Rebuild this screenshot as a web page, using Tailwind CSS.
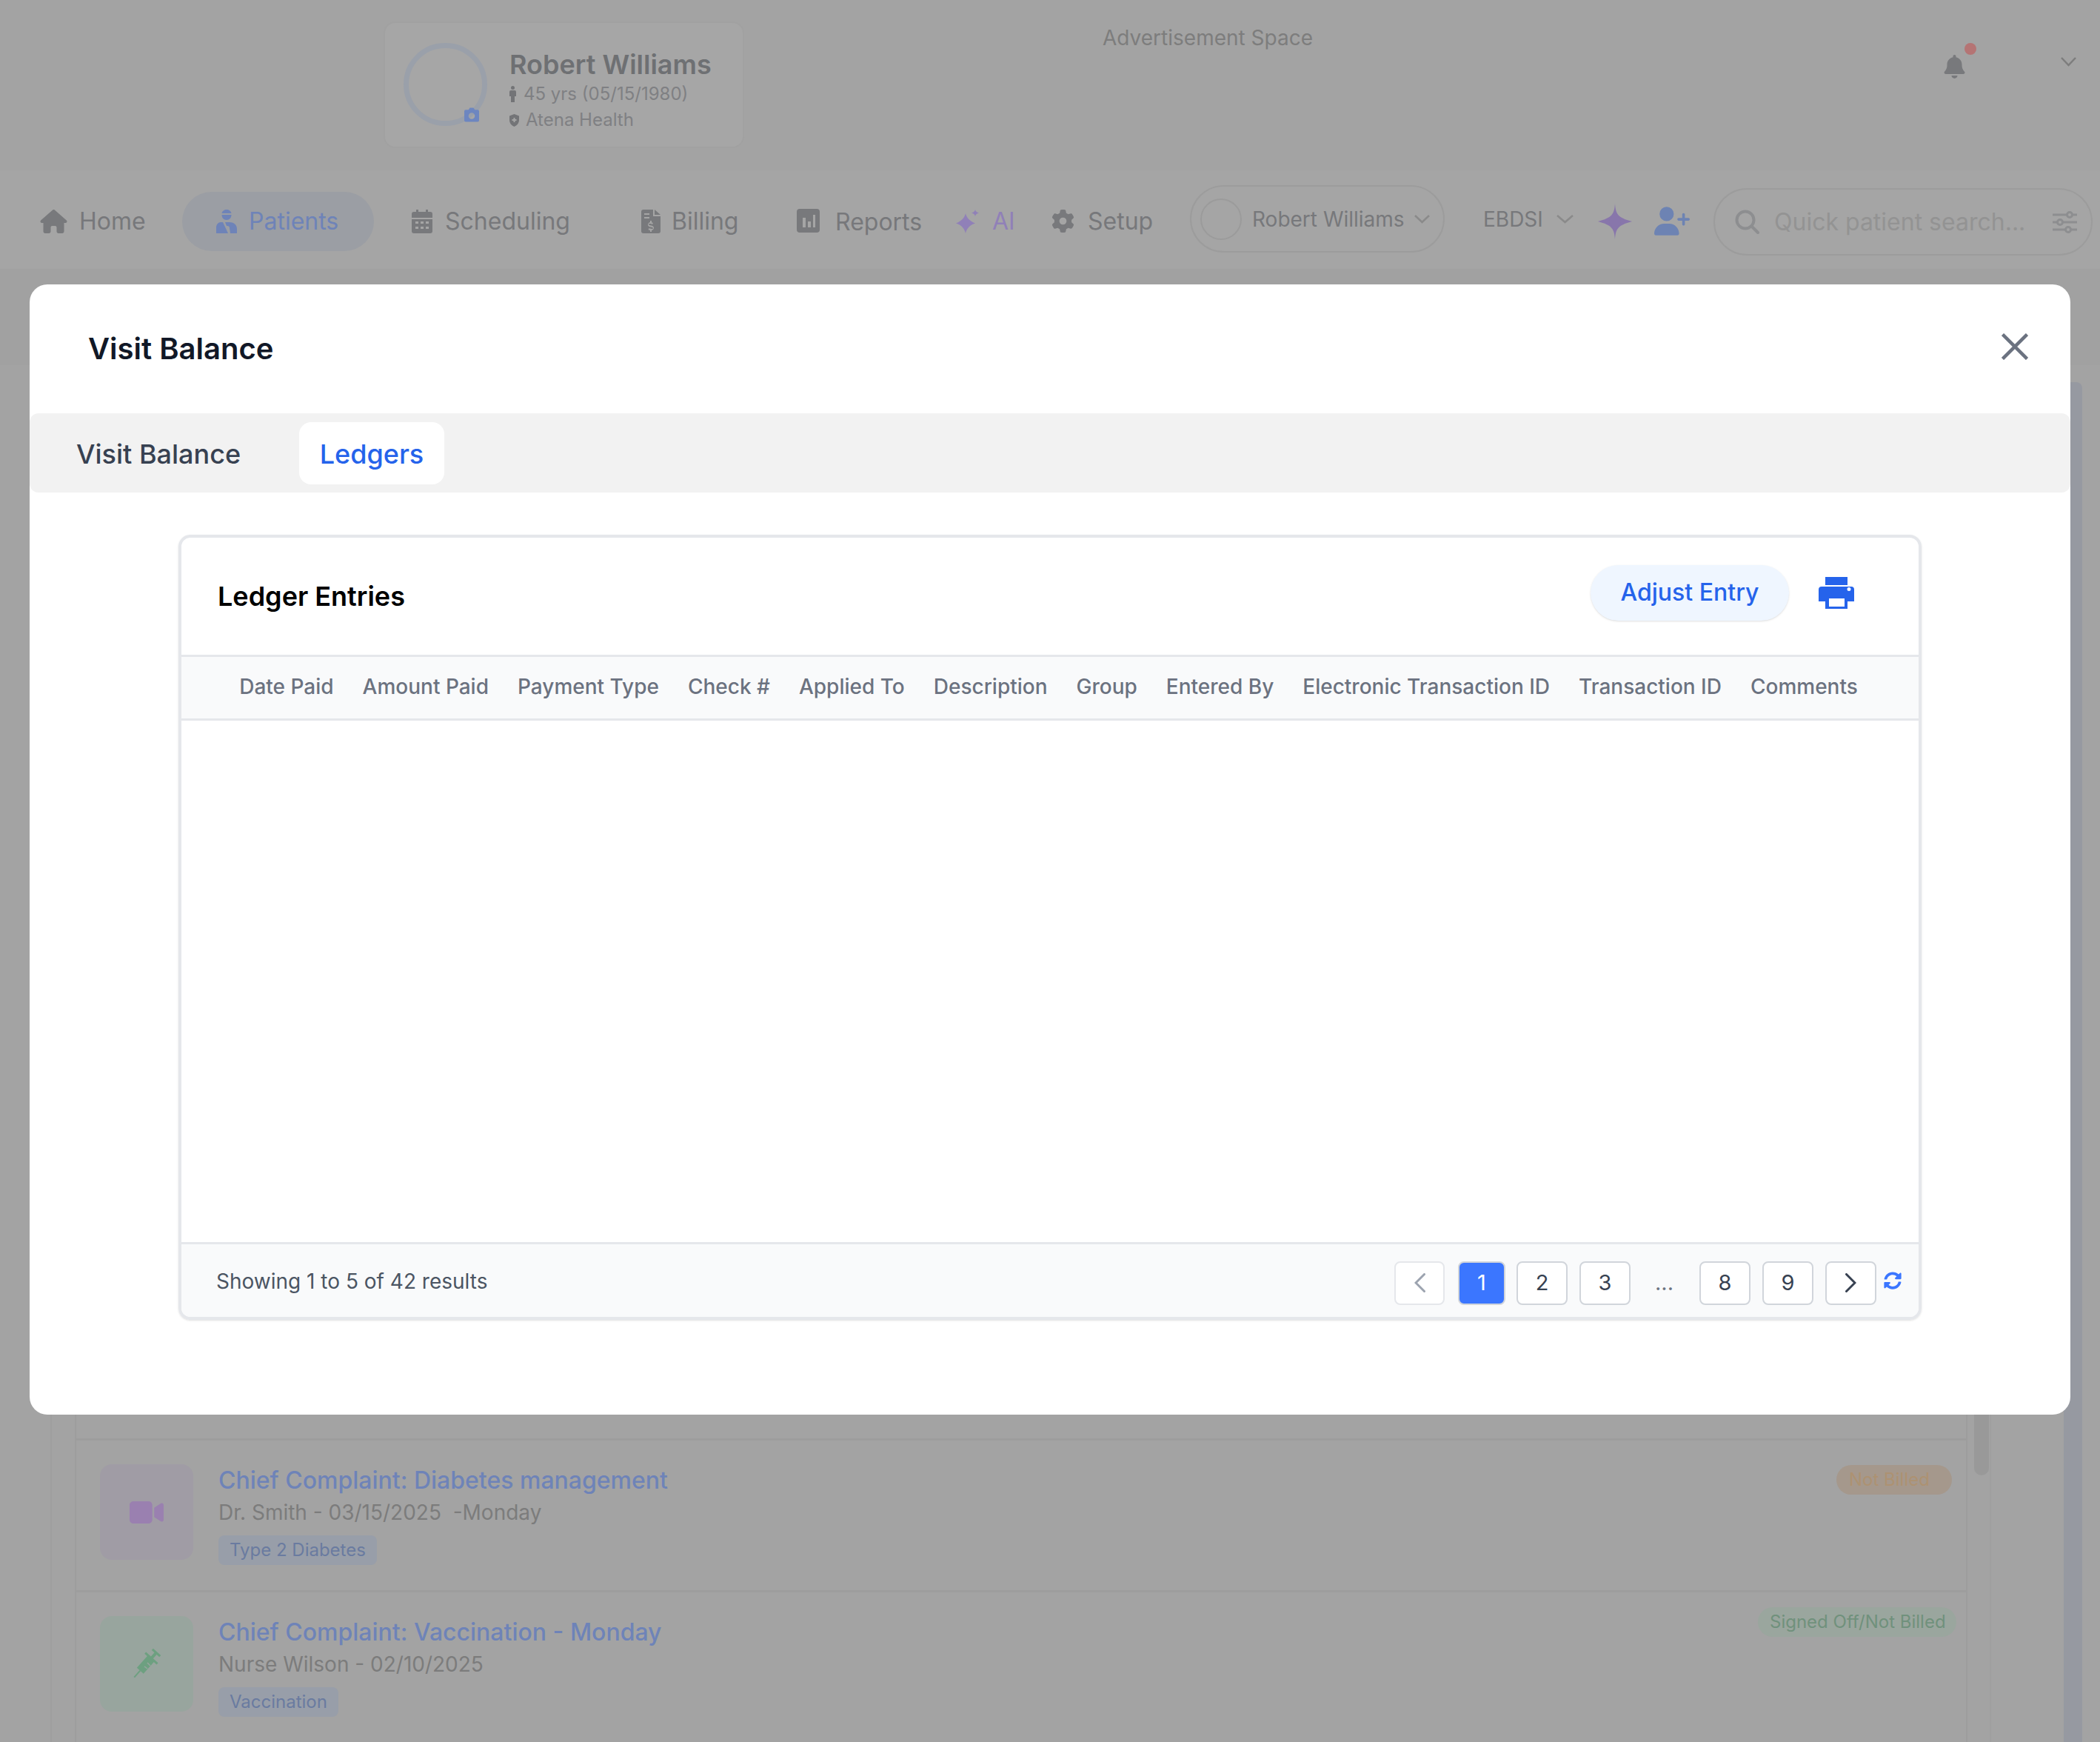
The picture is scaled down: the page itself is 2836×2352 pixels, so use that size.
<!DOCTYPE html>
<html lang="en">
<head>
  <meta charset="UTF-8" />
  <title>Visit Balance</title>
  <script src="https://cdn.jsdelivr.net/npm/@tailwindcss/browser@4"></script>
</head>
<body class="font-[Inter,sans-serif]">
  <div class="relative h-[2352px] w-[2836px] overflow-hidden bg-[#a3a3a3]">

    <!-- top header (dimmed behind the modal) -->
    <header class="flex h-[230px]">
      <div class="ml-[518px] mt-[29px] flex h-[171px] w-[487px] rounded-2xl border-2 border-[#a1a1a1] bg-[#a6a6a6] pl-[25px]">
        <div class="relative mt-[27px] h-[112px] w-[113px] rounded-full border-[7px] border-[#9aa0aa]">
          <svg class="absolute left-[75px] top-[80px] h-[20px] w-[20px]" viewBox="0 0 21 20"><path fill="#6d86c0" fill-rule="evenodd" d="M2 3h4l2-3h5l2 3h4a2 2 0 0 1 2 2v13a2 2 0 0 1-2 2H2a2 2 0 0 1-2-2V5a2 2 0 0 1 2-2zm8.500 4a4.500 4.500 0 1 0 0 9 4.500 4.500 0 0 0 0-9z"/></svg>
        </div>
        <div class="ml-[30px] mt-[33px]">
          <p class="text-[36px] font-semibold leading-[46px] text-[#6e7073]">Robert Williams</p>
          <p class="mt-[1px] flex items-center gap-[10px] text-[24px] leading-[32px] text-[#7f8083]">
            <svg class="h-[22px] w-[9px]" viewBox="0 0 9 22"><circle cx="4.500" cy="2.500" r="2.500" fill="#737477"/><path fill="#737477" d="M0 8a2 2 0 0 1 2-2h5a2 2 0 0 1 2 2v6H7v8H2v-8H0z"/></svg>45 yrs (05/15/1980)</p>
          <p class="mt-[3px] flex items-center gap-[9px] text-[24px] leading-[32px] text-[#7f8083]">
            <svg class="h-[17px] w-[13px]" viewBox="0 0 13 17"><path fill="#737477" fill-rule="evenodd" d="M6.500 0 13 2.500V8c0 4-2.700 7.400-6.500 9C2.700 15.400 0 12 0 8V2.500zM5.500 5v2h-2v2h2v2h2V9h2V7h-2V5z"/></svg>Atena Health</p>
        </div>
      </div>
      <p class="ml-[484px] mt-[33px] h-fit text-[28px] leading-[36px] text-[#7d7d7d]">Advertisement Space</p>
      <div class="relative ml-[852px] mt-[74px] h-[32px] w-[29px]">
        <svg class="h-[32px] w-[29px]" viewBox="0 0 448 512"><path fill="#78797c" d="M224 0c-17.700 0-32 14.300-32 32V51.200C119 66 64 130.600 64 208v18.800c0 47-17.300 92.400-48.500 127.600l-7.400 8.300c-8.400 9.400-10.400 22.900-5.300 34.400S19.400 416 32 416H416c12.600 0 24-7.400 29.200-18.900s3.100-25-5.300-34.400l-7.400-8.300C401.300 319.200 384 273.900 384 226.800V208c0-77.400-55-142-128-156.800V32c0-17.700-14.300-32-32-32zm45.300 493.300c12-12 18.700-28.300 18.700-45.300H224 160c0 17 6.700 33.300 18.700 45.300s28.300 18.700 45.300 18.700s33.300-6.700 45.300-18.700z"/></svg>
        <span class="absolute left-[28px] top-[-16px] h-[16px] w-[16px] rounded-full bg-[#b57474]"></span>
      </div>
      <svg class="ml-[129px] mt-[77px] h-[13px] w-[21px]" viewBox="0 0 21 13" fill="none"><path stroke="#7d7d7d" stroke-width="2.500" d="m1 1 9.500 10L20 1"/></svg>
    </header>

    <!-- nav bar -->
    <nav class="flex h-[133px] items-center bg-[#a5a5a5] pl-[54px] pt-[4px] text-[32px] leading-[44px] text-[#77787b]">
      <div class="flex w-[192px] items-center gap-[16px]">
        <svg class="h-[32px] w-[37px]" viewBox="0 0 576 512"><path fill="#78797c" d="M575.800 255.500c0 18-15 32.100-32 32.100h-32l.7 160.200c0 2.700-.2 5.400-.5 8.100V472c0 22.100-17.900 40-40 40H456c-1.100 0-2.200 0-3.300-.1c-1.400 .1-2.800 .1-4.200 .1H416 392c-22.100 0-40-17.900-40-40V448 384c0-17.700-14.300-32-32-32H256c-17.700 0-32 14.300-32 32v64 24c0 22.100-17.900 40-40 40H160 128.100c-1.500 0-3-.1-4.500-.2c-1.200 .1-2.400 .2-3.600 .2H104c-22.100 0-40-17.900-40-40V360c0-.9 0-1.900 .1-2.800V287.600H32c-18 0-32-14-32-32.100c0-9 3-17 10-24L266.400 8c7-7 15-8 22-8s15 2 21 7L564.800 231.500c8 7 12 15 11 24z"/></svg>
        <span>Home</span>
      </div>
      <div class="flex h-[80px] w-[259px] items-center gap-[16px] rounded-[40px] bg-[#9b9ea4] pl-[46px] text-[#6e83b8]">
        <svg class="h-[32px] w-[28px]" viewBox="0 0 28 32"><path fill="#6e83b8" fill-rule="evenodd" d="M14 0c3 0 6 2 6.500 5h-13C8 2 11 0 14 0zM7.500 7h13c0 4-2.500 7-6.500 7s-6.500-3-6.500-7zM6 17h3l7 15H0v-8c0-3 2-7 6-7zm6 0h6c5 0 10 3 10 9v6h-9l-1-7a3 3 0 0 0-3-3h-1z"/></svg>
        <span>Patients</span>
      </div>
      <div class="flex w-[361px] items-center gap-[17px] pl-[51px]">
        <svg class="h-[32px] w-[28px]" viewBox="0 0 28 32"><path fill="#78797c" fill-rule="evenodd" d="M6 0h3v3h10V0h3v3h3a3 3 0 0 1 3 3v5H0V6a3 3 0 0 1 3-3h3zM0 13h28v16a3 3 0 0 1-3 3H3a3 3 0 0 1-3-3zm5 3v3h4v-3zm7 0v3h4v-3zm7 0v3h4v-3zM5 23v3h4v-3zm7 0v3h4v-3zm7 0v3h4v-3z"/></svg>
        <span>Scheduling</span>
      </div>
      <div class="flex w-[210px] items-center gap-[15px]">
        <svg class="h-[32px] w-[26px]" viewBox="0 0 26 32"><path fill="#78797c" fill-rule="evenodd" d="M3 0h13v9h10v20a3 3 0 0 1-3 3H3a3 3 0 0 1-3-3V3a3 3 0 0 1 3-3zm15 0 8 7h-8zM4 5v2h7V5zm0 5v2h7v-2zm10 5h-2v2c-2 .5-3 2-3 3.500 0 4 7 2.500 7 4.500 0 1.500-4 1-5.500 0l-1 2c1 .8 2.500 1 2.500 1v2h2v-2c2-.5 3-2 3-3.500 0-4-7-2.500-7-4.500 0-1.500 3.500-1 5 0l1-2c-.8-.5-2-.8-2-.8z"/></svg>
        <span>Billing</span>
      </div>
      <div class="flex w-[215px] items-center gap-[21px] pt-[3px]">
        <svg class="-mt-[4px] h-[32px] w-[31px]" viewBox="0 0 31 32"><path fill="#78797c" fill-rule="evenodd" d="M4 0h23a4 4 0 0 1 4 4v24a4 4 0 0 1-4 4H4a4 4 0 0 1-4-4V4a4 4 0 0 1 4-4zm4 12v13h4V12zm7 5v8h4v-8zm7-9v17h3V8z"/></svg>
        <span>Reports</span>
      </div>
      <div class="flex w-[129px] items-center gap-[18px] text-[#9080b8]">
        <svg class="h-[32px] w-[31px]" viewBox="0 0 31 32"><path fill="#9080b8" d="M13 5c1.500 6 5 10 13 13.500C18 21 14.500 26 13 32 11.500 26 8 21 0 18.500 8 15 11.500 11 13 5zM26 0c.6 2.500 1.700 3.500 5 4.500-3.300 1-4.400 2-5 4.500-.6-2.500-1.700-3.500-5-4.500 3.300-1 4.400-2 5-4.500z"/></svg>
        <span>AI</span>
      </div>
      <div class="flex w-[187px] items-center gap-[18px]">
        <svg class="h-[31px] w-[31px]" viewBox="0 0 512 512"><path fill="#78797c" d="M495.900 166.600c3.200 8.700 .5 18.400-6.400 24.600l-43.300 39.400c1.100 8.300 1.700 16.800 1.700 25.400s-.6 17.100-1.700 25.400l43.300 39.400c6.900 6.200 9.600 15.900 6.400 24.600c-4.400 11.900-9.700 23.300-15.800 34.300l-4.700 8.100c-6.600 11-14 21.400-22.100 31.200c-5.900 7.200-15.700 9.600-24.500 6.800l-55.700-17.700c-13.400 10.300-28.200 18.900-44 25.400l-12.500 57.100c-2 9.100-9 16.300-18.200 17.800c-13.800 2.300-28 3.500-42.500 3.500s-28.700-1.200-42.500-3.500c-9.200-1.500-16.200-8.700-18.200-17.800l-12.500-57.100c-15.800-6.500-30.600-15.100-44-25.400L83.100 425.900c-8.800 2.800-18.600 .3-24.500-6.800c-8.100-9.800-15.500-20.200-22.100-31.200l-4.700-8.100c-6.100-11-11.400-22.400-15.800-34.300c-3.200-8.700-.5-18.400 6.400-24.600l43.300-39.400C64.600 273.100 64 264.600 64 256s.6-17.100 1.700-25.400L22.400 191.200c-6.900-6.200-9.600-15.900-6.400-24.600c4.400-11.900 9.700-23.300 15.800-34.300l4.700-8.100c6.600-11 14-21.400 22.100-31.200c5.900-7.200 15.700-9.600 24.500-6.800l55.700 17.700c13.400-10.300 28.200-18.900 44-25.400l12.500-57.100c2-9.100 9-16.300 18.200-17.800C227.300 1.200 241.500 0 256 0s28.700 1.200 42.500 3.500c9.200 1.500 16.200 8.700 18.200 17.800l12.500 57.100c15.800 6.500 30.600 15.100 44 25.400l55.700-17.700c8.800-2.800 18.600-.3 24.500 6.800c8.100 9.800 15.500 20.200 22.100 31.200l4.700 8.100c6.100 11 11.400 22.400 15.800 34.300zM256 336a80 80 0 1 0 0-160 80 80 0 1 0 0 160z"/></svg>
        <span>Setup</span>
      </div>
      <div class="flex h-[91px] w-[344px] -translate-y-[3px] items-center rounded-[46px] border-2 border-[#9c9c9c] pl-[12px] text-[28px]">
        <span class="h-[56px] w-[56px] shrink-0 rounded-full border-2 border-[#9b9b9b]"></span>
        <span class="ml-[14px] whitespace-nowrap">Robert Williams</span>
        <svg class="ml-[13px] h-[12px] w-[21px]" viewBox="0 0 21 12" fill="none"><path stroke="#8a8a8a" stroke-width="2.500" d="m1 1 9.500 9L20 1"/></svg>
      </div>
      <div class="ml-[52px] flex w-[155px] -translate-y-[3px] items-center gap-[18px] text-[28px]">
        <span>EBDSI</span>
        <svg class="h-[12px] w-[23px]" viewBox="0 0 23 12" fill="none"><path stroke="#8a8a8a" stroke-width="2.500" d="m1 1 10.500 9L22 1"/></svg>
      </div>
      <div class="w-[76px]">
        <svg class="h-[48px] w-[46px]" viewBox="0 0 46 48"><path fill="#8876ab" d="M23 0C24 14 27 19 46 24 27 29 24 34 23 48 22 34 19 29 0 24 19 19 22 14 23 0z"/><path fill="#8876ab" d="M23 12 32 24 23 36 14 24z"/></svg>
      </div>
      <div class="w-[80px]">
        <svg class="h-[39px] w-[48px]" viewBox="0 0 640 512"><path fill="#6d83b3" d="M96 128a128 128 0 1 1 256 0A128 128 0 1 1 96 128zM0 482.300C0 383.800 79.800 304 178.300 304h91.400C368.200 304 448 383.800 448 482.300c0 16.400-13.300 29.700-29.700 29.700H29.700C13.300 512 0 498.700 0 482.300zM504 312V248H440c-13.300 0-24-10.700-24-24s10.700-24 24-24h64V136c0-13.300 10.700-24 24-24s24 10.700 24 24v64h64c13.300 0 24 10.700 24 24s-10.700 24-24 24H552v64c0 13.300-10.700 24-24 24s-24-10.700-24-24z"/></svg>
      </div>
      <div class="flex h-[91px] w-[512px] translate-y-[1px] items-center rounded-[46px] border-2 border-[#9c9c9c] pl-[27px] pr-[19px] text-[32px] text-[#939393]">
        <svg class="h-[33px] w-[33px] shrink-0" viewBox="0 0 33 33" fill="none"><circle cx="14" cy="14" r="11.500" stroke="#8d8e90" stroke-width="4"/><path stroke="#8d8e90" stroke-width="4" stroke-linecap="round" d="m23 23 8 8"/></svg>
        <span class="ml-[20px] whitespace-nowrap">Quick patient search...</span>
        <svg class="ml-auto h-[30px] w-[33px]" viewBox="0 0 33 30" fill="none" stroke="#8d8e90" stroke-width="3"><path d="M0 5h33M0 15h33M0 25h33"/><circle cx="23" cy="5" r="3.500" fill="#a5a5a5"/><circle cx="10" cy="15" r="3.500" fill="#a5a5a5"/><circle cx="21" cy="25" r="3.500" fill="#a5a5a5"/></svg>
      </div>
    </nav>

    <div class="h-[130px] bg-[#a1a1a1]"></div>

    <!-- visit list behind the modal -->
    <main class="relative">
      <div class="ml-[68px] h-[1859px] w-[2621px] border-x-2 border-[#9f9f9f]">
        <div class="ml-[31px] w-[2556px]">
          <div class="h-[1449px] border-x-2 border-[#9d9d9d]"></div>
          <div class="flex h-[205px] border-x-2 border-t-[3px] border-[#9d9d9d] pl-[32px]">
            <div class="mt-[32px] flex h-[129px] w-[126px] items-center justify-center rounded-2xl bg-[#a09ca5]">
              <svg class="h-[30px] w-[46px]" viewBox="0 64 576 384" preserveAspectRatio="none"><path fill="#9a80b0" d="M0 128C0 92.700 28.700 64 64 64H320c35.300 0 64 28.700 64 64V384c0 35.300-28.700 64-64 64H64c-35.300 0-64-28.700-64-64V128zM559.100 99.800c10.400 5.600 16.900 16.400 16.900 28.200V384c0 11.800-6.500 22.600-16.900 28.200s-23 5-32.900-1.600l-96-64L416 337.100V320 192 174.900l14.200-9.500 96-64c9.800-6.500 22.400-7.200 32.900-1.600z"/></svg>
            </div>
            <div class="ml-[34px]">
              <p class="mt-[32px] text-[32px] font-medium leading-[44px] text-[#6e83b8]">Chief Complaint: Diabetes management</p>
              <p class="whitespace-pre text-[28px] leading-[42px] text-[#7c7c7c]">Dr. Smith - 03/15/2025  -Monday</p>
              <span class="mt-[10px] inline-block h-[40px] rounded-lg bg-[#989ea9] px-[15px] text-[24px] leading-[40px] text-[#6a7ba0]">Type 2 Diabetes</span>
            </div>
            <span class="ml-auto mr-[19px] mt-[33px] h-[40px] w-[156px] rounded-full bg-[#a5988c] pl-[17px] text-[24px] leading-[40px] text-[#ad9272]">Not Billed</span>
          </div>
          <div class="flex h-[205px] border-x-2 border-t-[3px] border-[#9d9d9d] pl-[32px]">
            <div class="mt-[32px] flex h-[129px] w-[126px] items-center justify-center rounded-2xl bg-[#98a59e]">
              <svg class="h-[41px] w-[40px]" viewBox="0 0 40 41"><g transform="rotate(42 20 20)" fill="#6da080"><rect x="14" y="11" width="12" height="22"/><rect x="19" y="33" width="2" height="12"/><rect x="18" y="1" width="4" height="10"/><rect x="13" y="-1" width="14" height="3"/><rect x="9" y="9" width="22" height="3"/></g><g stroke="#98a59e" stroke-width="1.500"><path d="m21 19 4 4M17 24l4 3"/></g></svg>
            </div>
            <div class="ml-[34px]">
              <p class="mt-[32px] text-[32px] font-medium leading-[44px] text-[#6e83b8]">Chief Complaint: Vaccination - Monday</p>
              <p class="text-[28px] leading-[42px] text-[#7c7c7c]">Nurse Wilson - 02/10/2025</p>
              <span class="mt-[10px] inline-block h-[40px] rounded-lg bg-[#989ea9] px-[15px] text-[24px] leading-[40px] text-[#6a7ba0]">Vaccination</span>
            </div>
            <span class="ml-auto mr-[13px] mt-[20px] h-[40px] w-[268px] whitespace-nowrap rounded-full bg-[#9aa69e] pl-[16px] text-[24px] leading-[40px] text-[#70917c]">Signed Off/Not Billed</span>
          </div>
        </div>
      </div>
      <!-- scrollbars -->
      <span class="absolute left-[2666px] top-[1270px] h-[229px] w-[20px] rounded-full bg-[#999999]"></span>
      <span class="absolute left-[2787px] top-[23px] bottom-0 w-[25px] rounded-t-[8px] bg-[#9699a1]"></span>
    </main>

    <!-- modal -->
    <div class="absolute left-[40px] top-[384px] flex h-[1526px] w-[2756px] flex-col rounded-[24px] bg-white">
      <div class="flex h-[174px] shrink-0 items-center justify-between pl-[79px] pr-[57px]">
        <h2 class="text-[40px] font-semibold text-[#111827]">Visit Balance</h2>
        <svg class="h-[36px] w-[36px] -translate-y-[3px]" viewBox="0 0 36 36" fill="none"><path stroke="#6b7280" stroke-width="4.500" d="m1.500 1.500 33 33m0-33-33 33"/></svg>
      </div>
      <div class="flex h-[107px] shrink-0 items-center rounded-xl bg-[#f2f2f2] pl-[63px] text-[36px] font-medium">
        <span class="w-[301px] pt-[2px] text-[#374151]">Visit Balance</span>
        <span class="flex h-[84px] w-[196px] items-center justify-center rounded-2xl bg-white pt-[2px] text-[#2563eb]">Ledgers</span>
      </div>
      <section class="ml-[201px] mt-[57px] flex h-[1060px] w-[2354px] flex-col rounded-2xl border-[4px] border-[#e5e7eb] shadow-sm">
        <div class="flex h-[158px] shrink-0 items-center pb-[10px] pl-[49px]">
          <h3 class="mt-[10px] text-[36px] font-semibold text-black">Ledger Entries</h3>
          <button class="ml-auto flex h-[75px] w-[268px] items-center justify-center rounded-full bg-[#eff6ff] text-[32px] font-medium text-[#2563eb] shadow-sm">Adjust Entry</button>
          <svg class="ml-[40px] mr-[87px] h-[43px] w-[48px]" viewBox="0 0 48 43"><path fill="#2563eb" fill-rule="evenodd" d="M9 0h30v11H9zM4 13h40a4 4 0 0 1 4 4v16H39v10H9V33H0V17a4 4 0 0 1 4-4zm10 16v11h21V29zm27-15a2 2 0 1 0 0 5 2 2 0 0 0 0-5z"/></svg>
        </div>
        <div class="flex h-[89px] shrink-0 items-center justify-center gap-[39px] border-y-[3px] border-[#e5e7eb] bg-[#f9fafb] pb-[3px] pr-[4px] text-[28px] font-medium text-[#6b7280]">
          <span>Date Paid</span>
          <span>Amount Paid</span>
          <span>Payment Type</span>
          <span>Check #</span>
          <span>Applied To</span>
          <span>Description</span>
          <span>Group</span>
          <span>Entered By</span>
          <span>Electronic Transaction ID</span>
          <span>Transaction ID</span>
          <span>Comments</span>
        </div>
        <div class="flex-1"></div>
        <div class="flex h-[101px] shrink-0 items-center rounded-b-xl border-t-[3px] border-[#e5e7eb] bg-[#f9fafb] pl-[47px] text-[28px] text-[#4b5563]">
          <p class="mt-[2px]">Showing 1 to 5 of 42 results</p>
          <div class="ml-auto mt-[6px] flex items-center text-[29px] text-[#374151]">
            <button class="flex h-[59px] w-[68px] items-center justify-center rounded-lg border-2 border-[#e5e7eb] bg-white">
              <svg class="h-[26px] w-[15px]" viewBox="0 0 15 26" fill="none"><path stroke="#9ca3af" stroke-width="3" stroke-linecap="round" d="M13.500 1.500 2 13l11.500 11.500"/></svg>
            </button>
            <button class="ml-[18px] h-[59px] w-[64px] rounded-lg border-2 border-[#d1d5db] bg-[#3b76ff] text-white">1</button>
            <button class="ml-[15px] h-[59px] w-[69px] rounded-lg border-2 border-[#d1d5db] bg-white">2</button>
            <button class="ml-[16px] h-[59px] w-[69px] rounded-lg border-2 border-[#d1d5db] bg-white">3</button>
            <span class="ml-[33px] w-[24px] text-[#6b7280]">...</span>
            <button class="ml-[36px] h-[59px] w-[69px] rounded-lg border-2 border-[#d1d5db] bg-white">8</button>
            <button class="ml-[16px] h-[59px] w-[69px] rounded-lg border-2 border-[#d1d5db] bg-white">9</button>
            <button class="ml-[16px] flex h-[59px] w-[69px] items-center justify-center rounded-lg border-2 border-[#d1d5db] bg-white">
              <svg class="h-[26px] w-[15px]" viewBox="0 0 15 26" fill="none"><path stroke="#374151" stroke-width="3" stroke-linecap="round" d="m1.500 1.500 11.500 11.500-11.500 11.500"/></svg>
            </button>
            <svg class="mb-[6px] ml-[10px] mr-[23px] h-[24px] w-[24px]" viewBox="0 0 512 512"><path fill="#3b76ff" d="M370.720 133.280C339.458 104.008 298.888 87.962 255.848 88c-77.458.068-144.328 53.178-162.791 126.850-1.344 5.363-6.122 9.150-11.651 9.150H24.103c-7.498 0-13.194-6.807-11.807-14.176C33.933 94.924 134.813 8 256 8c66.448 0 126.791 26.136 171.315 68.685L463.030 40.970C478.149 25.851 504 36.559 504 57.941V192c0 13.255-10.745 24-24 24H345.941c-21.382 0-32.090-25.851-16.971-40.971l41.750-41.749zM32 296h134.059c21.382 0 32.090 25.851 16.971 40.971l-41.750 41.750c31.262 29.273 71.835 45.319 114.876 45.280 77.418-.07 144.315-53.144 162.787-126.849 1.344-5.363 6.122-9.150 11.651-9.150h57.304c7.498 0 13.194 6.807 11.807 14.176C478.067 417.076 377.187 504 256 504c-66.448 0-126.791-26.136-171.315-68.685L48.970 471.030C33.851 486.149 8 475.441 8 454.059V320c0-13.255 10.745-24 24-24z"/></svg>
          </div>
        </div>
      </section>
    </div>
  </div>
</body>
</html>
